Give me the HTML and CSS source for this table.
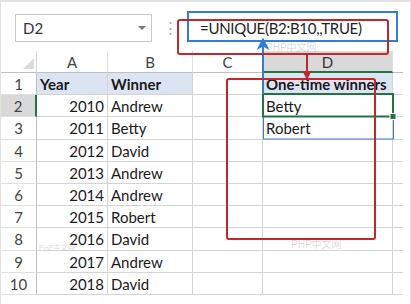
FILE: index.html
```html
<!DOCTYPE html>
<html>
<head>
<meta charset="utf-8">
<link rel="stylesheet" href="styles.css">
</head>
<body>
<div class="sheet">
  <div class="toolbar">
    <div class="namebox"><span>D2</span><span class="caret"></span></div>
    <div class="dots">⋮</div>
    <div class="formula">=UNIQUE(B2:B10,,TRUE)</div>
  </div>
  <div class="grid">
    <div class="corner"><span class="tri"></span></div>
    <div class="ch">A</div><div class="ch">B</div><div class="ch">C</div><div class="ch sel">D</div><div class="ch tail"></div>

    <div class="rh">1</div><div class="c hd">Year</div><div class="c hd">Winner</div><div class="c"></div><div class="c hd">One-time winners</div><div class="c tail"></div>
    <div class="rh sel">2</div><div class="c num">2010</div><div class="c">Andrew</div><div class="c"></div><div class="c">Betty</div><div class="c tail"></div>
    <div class="rh">3</div><div class="c num">2011</div><div class="c">Betty</div><div class="c"></div><div class="c">Robert</div><div class="c tail"></div>
    <div class="rh">4</div><div class="c num">2012</div><div class="c">David</div><div class="c"></div><div class="c"></div><div class="c tail"></div>
    <div class="rh">5</div><div class="c num">2013</div><div class="c">Andrew</div><div class="c"></div><div class="c"></div><div class="c tail"></div>
    <div class="rh">6</div><div class="c num">2014</div><div class="c">Andrew</div><div class="c"></div><div class="c"></div><div class="c tail"></div>
    <div class="rh">7</div><div class="c num">2015</div><div class="c">Robert</div><div class="c"></div><div class="c"></div><div class="c tail"></div>
    <div class="rh">8</div><div class="c num">2016</div><div class="c">David</div><div class="c"></div><div class="c"></div><div class="c tail"></div>
    <div class="rh">9</div><div class="c num">2017</div><div class="c">Andrew</div><div class="c"></div><div class="c"></div><div class="c tail"></div>
    <div class="rh">10</div><div class="c num">2018</div><div class="c">David</div><div class="c"></div><div class="c"></div><div class="c tail"></div>
  </div>

  <div class="wm wm1">PHP中文网</div>
  <div class="wm wm2">PHP中文网</div>
  <div class="wm wm3">PHP中文网</div>

  <svg class="marks" width="411" height="304" viewBox="0 0 411 304">
    <rect x="263.5" y="94.5" width="130" height="44.5" fill="none" stroke="#4a78c4" stroke-width="1"/>
    <rect x="263" y="94" width="130" height="22.5" fill="none" stroke="#217346" stroke-width="2"/>
    <rect x="390" y="113.5" width="6" height="6" fill="#217346" stroke="#fff" stroke-width="1"/>
    <rect x="188" y="12" width="209" height="29" fill="none" stroke="#2d7fd8" stroke-width="2"/>
    <line x1="263" y1="44" x2="263" y2="94" stroke="#2d7fd8" stroke-width="2"/>
    <path d="M256.5 50 L263 37.5 L269.5 50 L263 46.5 Z" fill="#2d7fd8"/>
    <rect x="178" y="20" width="210" height="34" rx="2" fill="none" stroke="#c1272d" stroke-width="2"/>
    <line x1="307" y1="54" x2="307" y2="74" stroke="#c1272d" stroke-width="2"/>
    <path d="M302.5 71 L307 80 L311.5 71 Z" fill="#c1272d"/>
    <rect x="227" y="79" width="148" height="160" rx="2" fill="none" stroke="#c1272d" stroke-width="2"/>
  </svg>
</div>
</body>
</html>
```
FILE: styles.css
```css
* { box-sizing: border-box; }
html, body { margin: 0; padding: 0; background: #fff; }
body { font-family: Lato, "Liberation Sans", sans-serif; color: #1a1a1a; }

.sheet {
  position: relative;
  width: 411px;
  height: 304px;
  overflow: hidden;
  border: 1px solid #e2e2e2;
  border-top-width: 2px;
  border-bottom: none;
}

.toolbar {
  display: flex;
  align-items: center;
  height: 49px;
  padding: 10px 0 8px 14px;
}

.namebox {
  width: 137px;
  height: 28px;
  border: 1px solid #c8c8c8;
  display: flex;
  align-items: center;
  justify-content: space-between;
  padding: 0 5px 0 7px;
  font-size: 15px;
  color: #333;
}
.caret {
  width: 0; height: 0;
  border-left: 4px solid transparent;
  border-right: 4px solid transparent;
  border-top: 4px solid #777;
}
.dots {
  width: 36px;
  text-align: center;
  color: #aaa;
  font-size: 15px;
}
.formula {
  padding-left: 12px;
  font-size: 15px;
  letter-spacing: -0.3px;
  color: #222;
}

.grid {
  display: grid;
  grid-template-columns: 36px 71px 85px 70px 130px 10px;
  grid-template-rows: 22px repeat(10, 22.2px);
  width: 402px;
}

.corner {
  border-right: 1px solid #d4d4d4;
  border-bottom: 1px solid #c0c0c0;
  position: relative;
}
.tri {
  position: absolute;
  right: 2px; bottom: 3px;
  width: 0; height: 0;
  border-left: 11px solid transparent;
  border-bottom: 11px solid #dcdcdc;
}
.ch {
  border-right: 1px solid #e0e0e0;
  border-bottom: 1px solid #c0c0c0;
  text-align: center;
  font-size: 15px;
  line-height: 21px;
  padding-top: 1px;
  color: #444;
}
.ch.sel {
  background: #d9d9d9;
  border-bottom: 2px solid #217346;
  color: #333;
}
.ch.tail { border-right: none; }

.rh {
  border-right: 1px solid #c0c0c0;
  border-bottom: 1px solid #e0e0e0;
  text-align: center;
  font-size: 15px;
  line-height: 21px;
  padding-top: 1px;
  color: #444;
}
.rh.sel {
  background: #d9d9d9;
  border-right: 2px solid #217346;
}

.c {
  border-right: 1px solid #d4d4d4;
  border-bottom: 1px solid #d4d4d4;
  font-size: 15px;
  line-height: 21px;
  padding: 1px 3px 0;
  white-space: nowrap;
}
.c.tail { border-right: none; }
.c.hd { background: #dce4f2; font-weight: bold; }
.c.num { text-align: right; }

.wm {
  position: absolute;
  font-size: 10px;
  color: rgba(150,150,150,0.35);
  font-family: "Liberation Sans", "Noto Sans CJK SC", sans-serif;
}
.wm1 { left: 265px; top: 37px; }
.wm2 { left: 38px; top: 240px; font-size: 7px; }
.wm3 { left: 290px; top: 234px; }

.marks {
  position: absolute;
  left: -1px; top: -2px;
  pointer-events: none;
}
```
